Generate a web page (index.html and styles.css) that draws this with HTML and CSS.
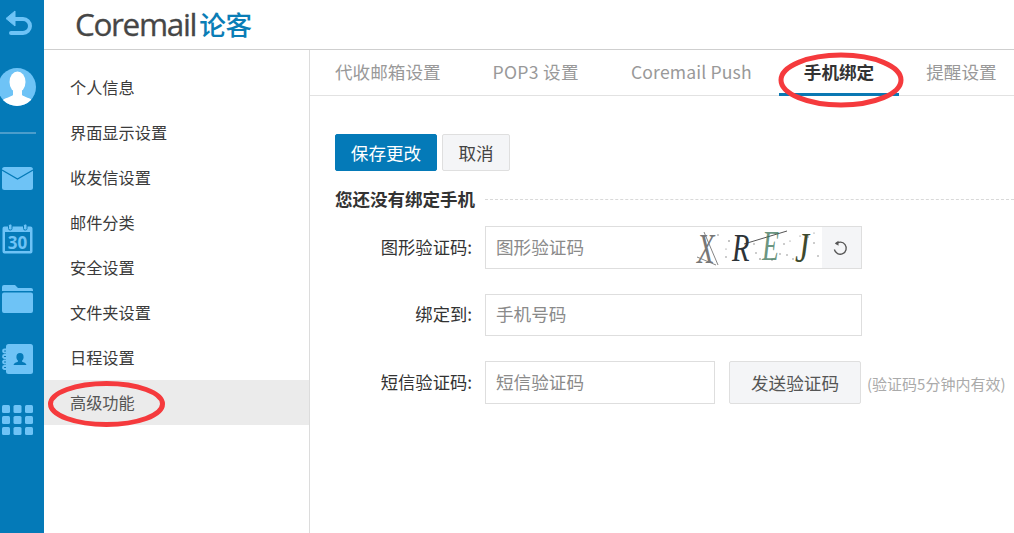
FILE: index.html
```html
<!DOCTYPE html>
<html lang="zh">
<head>
<meta charset="utf-8">
<title>Coremail 论客</title>
<link rel="stylesheet" href="styles.css">
</head>
<body>
<div class="page">
  <nav class="rail">
    <svg class="ic ic-back" width="28" height="26" viewBox="0 0 28 26"><path d="M8 9h11a6.500 6.500 0 0 1 0 14H7" fill="none" stroke="#6ec3f6" stroke-width="4" stroke-linecap="round"/><path d="M11 1v15L2 8.500z" fill="#6ec3f6" stroke="#6ec3f6" stroke-width="1" stroke-linejoin="round"/></svg>
    <svg class="ic ic-avatar" width="36" height="38" viewBox="0 0 36 38"><defs><clipPath id="av"><circle cx="17" cy="19" r="19"/></clipPath></defs><circle cx="17" cy="19" r="19" fill="#6ec3f6"/><g clip-path="url(#av)" fill="#fff"><ellipse cx="17.500" cy="14" rx="8" ry="10.500"/><path d="M13 22h9v5c2 2 9 3 11 6v6H2v-6c2-3 9-4 11-6z"/></g></svg>
    <div class="rail-sep"></div>
    <svg class="ic ic-mail" width="31" height="23" viewBox="0 0 31 23"><rect width="31" height="23" rx="2.500" fill="#6ec3f6"/><path d="M0 3l15.500 9L31 3" fill="none" stroke="#047ab8" stroke-width="1.200"/></svg>
    <svg class="ic ic-cal" width="31" height="30" viewBox="0 0 31 30"><path d="M2.500 2.500h26a2 2 0 0 1 2 2v23a2 2 0 0 1-2 2h-26a2 2 0 0 1-2-2v-23a2 2 0 0 1 2-2z" fill="#6ec3f6"/><rect x="3" y="8" width="25" height="19" fill="#047ab8"/><rect x="6.500" y="0" width="3.500" height="6" rx="1.500" fill="#6ec3f6" stroke="#047ab8"/><rect x="21.500" y="0" width="3.500" height="6" rx="1.500" fill="#6ec3f6" stroke="#047ab8"/><text x="15.500" y="25" class="cal-num">30</text></svg>
    <svg class="ic ic-folder" width="31" height="28" viewBox="0 0 31 28"><path d="M2 0h11l3 3h13a2 2 0 0 1 2 2v1H0V2a2 2 0 0 1 2-2z" fill="#6ec3f6"/><path d="M2 7.500h27a2 2 0 0 1 2 2V26a2 2 0 0 1-2 2H2a2 2 0 0 1-2-2V9.500a2 2 0 0 1 2-2z" fill="#6ec3f6"/></svg>
    <svg class="ic ic-book" width="31" height="30" viewBox="0 0 31 30"><rect x="4" width="27" height="30" rx="2.500" fill="#6ec3f6"/><g fill="none" stroke="#6ec3f6" stroke-width="1.800"><path d="M5 5.500H2.500a1.500 1.500 0 0 0 0 3H5M5 11H2.500a1.500 1.500 0 0 0 0 3H5M5 16.500H2.500a1.500 1.500 0 0 0 0 3H5M5 22H2.500a1.500 1.500 0 0 0 0 3H5"/></g><path d="M18 9a3.600 4.200 0 0 1 3.600 4.200c0 1.500-.8 2.700-1.500 3.400v1.200c1.500.7 4 1.200 4.400 3.200H11.500c.4-2 2.900-2.500 4.400-3.200v-1.200c-.7-.7-1.500-1.900-1.500-3.400A3.600 4.200 0 0 1 18 9z" fill="#047ab8"/></svg>
    <svg class="ic ic-grid" width="31" height="30" viewBox="0 0 31 30" fill="#6ec3f6"><rect width="8" height="8" rx="1.500"/><rect x="11.500" width="8" height="8" rx="1.500"/><rect x="23" width="8" height="8" rx="1.500"/><rect y="11" width="8" height="8" rx="1.500"/><rect x="11.500" y="11" width="8" height="8" rx="1.500"/><rect x="23" y="11" width="8" height="8" rx="1.500"/><rect y="22" width="8" height="8" rx="1.500"/><rect x="11.500" y="22" width="8" height="8" rx="1.500"/><rect x="23" y="22" width="8" height="8" rx="1.500"/></svg>
  </nav>
  <div class="main">
    <header class="top">
      <div class="logo"><span class="logo-en">Coremail</span><span class="logo-cn">论客</span></div>
    </header>
    <div class="body">
      <aside class="side">
        <a class="side-item">个人信息</a>
        <a class="side-item">界面显示设置</a>
        <a class="side-item">收发信设置</a>
        <a class="side-item">邮件分类</a>
        <a class="side-item">安全设置</a>
        <a class="side-item">文件夹设置</a>
        <a class="side-item">日程设置</a>
        <a class="side-item side-item-on">高级功能</a>
      </aside>
      <section class="content">
        <div class="tabs">
          <a class="tab">代收邮箱设置</a>
          <a class="tab tab-pop">POP3 设置</a>
          <a class="tab tab-push">Coremail Push</a>
          <a class="tab tab-on">手机绑定</a>
          <a class="tab">提醒设置</a>
        </div>
        <div class="panel">
          <div class="actions">
            <button class="btn btn-primary">保存更改</button>
            <button class="btn btn-plain">取消</button>
          </div>
          <div class="legend"><span class="legend-text">您还没有绑定手机</span><span class="legend-line"></span></div>
          <div class="form-row row-a">
            <label class="lbl">图形验证码:</label>
            <div class="field field-wide field-captcha">
              <span class="ph">图形验证码</span>
              <svg class="captcha" width="126" height="41" viewBox="0 0 126 41">
                <g class="noise" fill="#555">
                  <circle cx="22" cy="8" r=".7"/><circle cx="30" cy="30" r=".7"/><circle cx="33" cy="14" r=".8"/><circle cx="30" cy="22" r=".6"/><circle cx="64" cy="32" r=".8"/><circle cx="60" cy="26" r=".7"/><circle cx="76" cy="33" r=".7"/><circle cx="88" cy="17" r=".7"/><circle cx="91" cy="28" r=".7"/><circle cx="94" cy="14" r=".6"/><circle cx="112" cy="10" r=".7"/><circle cx="118" cy="16" r=".7"/><circle cx="122" cy="29" r=".7"/><circle cx="118" cy="6" r=".6"/><circle cx="58" cy="17" r=".7"/><circle cx="97" cy="32" r=".7"/><circle cx="84" cy="27" r=".7"/><circle cx="104" cy="9" r=".6"/>
                </g>
                <path d="M1 30L20 38M8 5l14 33" fill="none" stroke="#777" stroke-width=".9"/>
                <path d="M48 17L91 4" fill="none" stroke="#555" stroke-width="1"/>
                <text class="cap cap1" transform="translate(1 36) scale(1.100 1.600)">X</text>
                <text class="cap cap2" transform="translate(36 34) scale(1.100 1.530)">R</text>
                <text class="cap cap3" transform="translate(66 33) scale(1.070 1.600)">E</text>
                <text class="cap cap4" transform="translate(99 35) scale(1.220 1.600)">J</text>
              </svg>
              <button class="refresh" aria-label="刷新"><svg width="16" height="16" viewBox="0 0 16 16"><path d="M4.500 3.500A6 6 0 1 1 2.200 8.500" fill="none" stroke="#555" stroke-width="1.300" transform="rotate(-10 8 8)"/><path d="M6.500 .8v5L2.800 3.300z" fill="#555"/></svg></button>
            </div>
          </div>
          <div class="form-row row-b">
            <label class="lbl">绑定到:</label>
            <div class="field field-wide"><span class="ph">手机号码</span></div>
          </div>
          <div class="form-row row-c">
            <label class="lbl">短信验证码:</label>
            <div class="field field-sms"><span class="ph">短信验证码</span></div>
            <button class="btn btn-plain btn-send">发送验证码</button>
            <span class="hint">(验证码5分钟内有效)</span>
          </div>
        </div>
      </section>
    </div>
  </div>
  <svg class="mark mark-side" width="118" height="48" viewBox="0 0 118 48"><ellipse cx="58.500" cy="24" rx="56" ry="20.500" fill="none" stroke="#f53a3d" stroke-width="5"/></svg>
  <svg class="mark mark-tab" width="126" height="56" viewBox="0 0 126 56"><ellipse cx="63" cy="28" rx="60" ry="25" fill="none" stroke="#f53a3d" stroke-width="5"/></svg>
</div>
</body>
</html>
```

FILE: styles.css
```css
* { box-sizing: border-box; }
html, body { margin: 0; height: 100%; }
body {
  font-family: "Noto Sans CJK SC", "Open Sans", "Liberation Sans", sans-serif;
  color: #333;
  background: #fff;
  overflow: hidden;
}
.page { position: relative; display: flex; width: 1014px; height: 533px; overflow: hidden; }

.rail { width: 44px; flex: none; background: #047ab8; display: flex; flex-direction: column; align-items: flex-start; }
.ic { display: block; flex: none; margin-left: 2px; }
.ic-back { margin: 10px 0 0 4px; }
.ic-avatar { margin: 32px 0 0 0; }
.rail-sep { width: 36px; height: 2px; margin-top: 26px; background: #4b9dcb; }
.ic-mail { margin-top: 33px; }
.ic-cal { margin-top: 34px; }
.cal-num { font-family: "Open Sans", sans-serif; font-size: 17px; font-weight: 700; fill: #6ec3f6; text-anchor: middle; }
.ic-folder { margin-top: 31px; }
.ic-book { margin-top: 31px; }
.ic-grid { margin-top: 31px; }

.main { flex: 1; min-width: 0; display: flex; flex-direction: column; }
.top { height: 50px; flex: none; border-bottom: 1px solid #cfcfcf; padding-left: 31px; }
.logo { display: flex; align-items: center; height: 49px; }
.logo-en { font-family: "Open Sans", sans-serif; font-size: 31.500px; color: #464646; letter-spacing: -1.350px; line-height: 1; padding-bottom: 1px; -webkit-text-stroke: .3px #464646; }
.logo-cn { font-size: 26.500px; font-weight: 500; color: #0a7db6; margin-left: 3px; line-height: 1; padding-bottom: 1px; }

.body { flex: 1; display: flex; min-height: 0; }
.side { width: 266px; flex: none; border-right: 1px solid #dcdcdc; padding-top: 15px; }
.side-item { display: block; height: 45px; line-height: 45px; padding-left: 26px; font-size: 16.200px; color: #3b3b3b; }
.side-item-on { background: #ebebeb; color: #555; }

.content { flex: 1; min-width: 0; display: flex; flex-direction: column; }
.tabs { display: flex; gap: 2px; height: 46px; flex: none; border-bottom: 1px solid #e2e2e2; }
.tab { display: block; flex: none; height: 46px; line-height: 43px; padding: 0 25px; font-size: 17.600px; color: #999; border-bottom: 3px solid transparent; white-space: nowrap; }
.tab-pop { letter-spacing: .3px; }
.tab-push { letter-spacing: .15px; }
.tab-on { color: #333; font-weight: 700; border-bottom-color: #0a78b3; }

.panel { padding: 38px 0 0 25px; }
.actions { display: flex; gap: 5px; }
.btn { display: block; font-family: inherit; border-radius: 2px; font-size: 17.600px; padding: 0; height: 37px; line-height: 34px; }
.btn-primary { width: 102px; background: #047ab8; border: 1px solid #047ab8; color: #fff; }
.btn-plain { width: 68px; background: #f4f5f7; border: 1px solid #dfdfdf; color: #444; }

.legend { display: flex; align-items: center; margin-top: 17px; height: 22px; }
.legend-text { font-size: 17.500px; font-weight: 700; color: #333; line-height: 22px; }
.legend-line { flex: 1; border-top: 1px dashed #d9d9d9; margin-left: 10px; }

.form-row { display: flex; align-items: center; }
.row-a { margin-top: 16px; }
.row-b { margin-top: 25px; }
.row-c { margin-top: 25px; }
.lbl { width: 137px; margin-right: 13px; text-align: right; font-size: 17.300px; color: #333; flex: none; line-height: 24px; padding-bottom: 2px; }
.field { height: 42px; border: 1px solid #dedede; display: flex; align-items: center; padding-left: 10px; background: #fff; flex: none; }
.field-wide { width: 377px; }
.field-captcha { height: 43px; padding-right: 0; }
.row-c .field { height: 43px; }
.field-sms { width: 230px; }
.ph { font-size: 17.600px; line-height: 24px; padding-bottom: 2px; color: #8a8a8a; flex: 1; }
.captcha { display: block; flex: none; overflow: visible; }
.noise circle { opacity: .8; }
.cap { font-family: "Liberation Serif", serif; font-style: italic; font-size: 26px; fill: #333; }
.cap1 { fill: #777; }
.cap2 { fill: #2d3338; }
.cap3 { fill: #3a7358; fill-opacity: .75; }
.cap4 { fill: #3f4a2e; }
.refresh { width: 39px; height: 41px; flex: none; border: 0; padding: 0 3px 0 0; background: #f4f5f7; display: flex; align-items: center; justify-content: center; }
.btn-send { width: 132px; height: 43px; margin-left: 14px; line-height: 36px; color: #555; }
.hint { margin-left: 6px; font-size: 15px; color: #aaa; white-space: nowrap; position: relative; top: 1px; }

.mark { position: absolute; display: block; }
.mark-side { left: 48px; top: 380px; }
.mark-tab { left: 778px; top: 52px; }
```
